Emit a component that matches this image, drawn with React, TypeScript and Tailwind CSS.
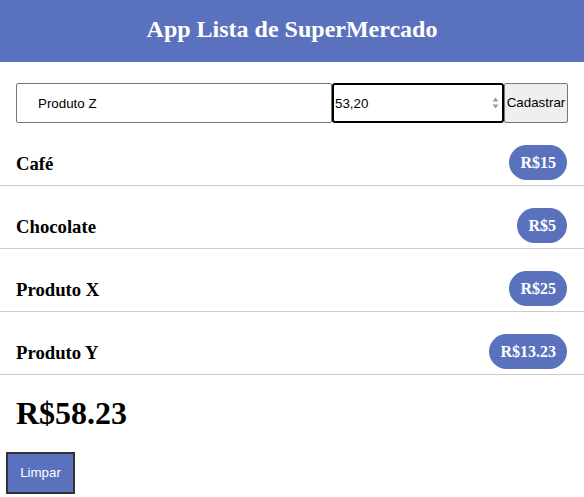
const items = [
  { name: "Café", price: "R$15" },
  { name: "Chocolate", price: "R$5" },
  { name: "Produto X", price: "R$25" },
  { name: "Produto Y", price: "R$13.23" },
];

const serif = { fontFamily: '"Liberation Serif", "Times New Roman", serif' };
const sans = { fontFamily: '"Liberation Sans", Arial, sans-serif' };

export default function App() {
  return (
    <div className="min-h-screen bg-white text-black" style={serif}>
      <header className="h-[62px] bg-[#5a72bd] pt-[17px] text-center">
        <h2 className="text-[24px] font-bold leading-6 text-white">App Lista de SuperMercado</h2>
      </header>

      <form className="mx-4 mt-[21px] flex h-10" style={sans} onSubmit={(e) => e.preventDefault()}>
        <input
          defaultValue="Produto Z"
          className="h-10 min-w-0 flex-1 rounded-[2px] border border-[#767676] pl-[21px] text-[13.33px] text-black outline-none"
        />
        <div className="relative h-10 w-[172px]">
          <input
            defaultValue="53,20"
            className="h-10 w-full rounded-[3px] border-2 border-black pl-[1px] text-[13.33px] text-black outline-none"
          />
          <svg className="absolute right-[5px] top-[14px]" width="7" height="12" viewBox="0 0 7 12">
            <path d="M3.5 0.5 L6.5 4.5 L0.5 4.5 Z" fill="#9a9a9a" />
            <path d="M3.5 11.5 L6.5 7.5 L0.5 7.5 Z" fill="#9a9a9a" />
          </svg>
        </div>
        <button
          type="submit"
          className="h-10 w-[64px] rounded-[2px] border border-[#767676] bg-[#efefef] px-0 text-[13.33px] text-black"
        >
          Cadastrar
        </button>
      </form>

      <ul>
        {items.map((item) => (
          <li
            key={item.name}
            className="flex items-center justify-between border-b border-[#cccccc] pb-[5px] pl-4 pr-[17px] pt-[22px]"
          >
            <h3 className="mt-[3px] text-[18.72px] font-bold leading-6">{item.name}</h3>
            <span className="flex h-[35px] items-center rounded-full bg-[#5a72bd] px-[11px] text-[16px] font-bold text-white">
              {item.price}
            </span>
          </li>
        ))}
      </ul>

      <h1 className="ml-4 mt-[22px] text-[32px] font-bold leading-8">R$58.23</h1>

      <button
        type="button"
        className="ml-[6px] mt-[23px] flex h-[42px] w-[69px] items-center justify-center border-2 border-[#333333] bg-[#5a72bd] text-[13.33px] text-white"
        style={sans}
      >
        Limpar
      </button>
    </div>
  );
}
